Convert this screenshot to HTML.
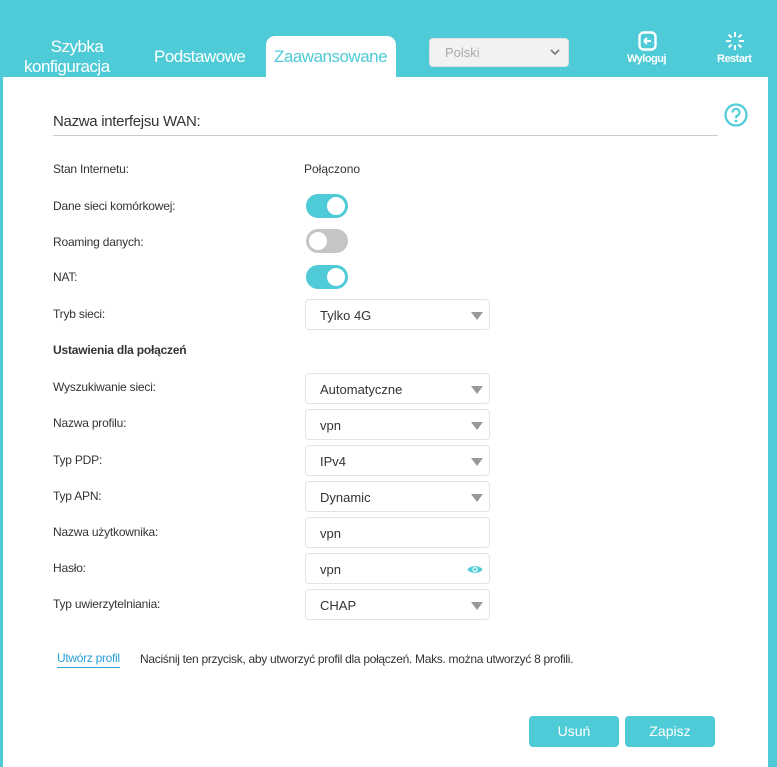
<!DOCTYPE html>
<html><head><meta charset="utf-8"><style>
*{box-sizing:border-box;margin:0;padding:0}
body{width:777px;height:759px;background:#4ecbd6;font-family:"Liberation Sans",sans-serif;position:relative;overflow:hidden;color:#333}
.a{position:absolute}
.nav{color:#fff;font-size:17px;letter-spacing:-0.5px}
.panel{left:3px;top:77px;width:765px;height:690px;background:#fff}
.lbl{left:53px;font-size:12px;color:#333;letter-spacing:-0.2px}
.ctl{left:305px;width:185px;height:31px;border:1px solid #e3e3e3;border-radius:4px;font-size:13px;color:#333;padding:8px 0 0 14px}
.arr{position:absolute;right:6px;top:12px;width:0;height:0;border-left:6px solid transparent;border-right:6px solid transparent;border-top:8px solid #999}
.tg{left:306px;width:42px;height:24px;border-radius:12px;background:#4ecbd6}
.tg::after{content:"";position:absolute;top:3px;right:3px;width:18px;height:18px;border-radius:50%;background:#fff}
.tg.off{background:#c5c5c8}
.tg.off::after{right:auto;left:3px}
.btn{top:716px;width:90px;height:31px;background:#4ecbd6;border-radius:4px;color:#fff;font-size:14px;text-align:center;line-height:31px}
</style></head><body>
<div class="a nav" style="left:42px;top:38px;line-height:18px;text-align:center;width:70px">Szybka</div>
<div class="a nav" style="left:24px;top:57px;">konfiguracja</div>
<div class="a nav" style="left:154px;top:47px">Podstawowe</div>
<div class="a" style="left:266px;top:36px;width:130px;height:44px;background:#fff;border-radius:9px 9px 0 0"></div>
<div class="a nav" style="left:274px;top:47px;color:#4ecbd6">Zaawansowane</div>
<div class="a" style="left:429px;top:38px;width:140px;height:29px;background:#f2f2f2;border-radius:4px;border:1px solid #e0e0e0;font-size:13px;color:#aaa;padding:6px 0 0 15px">Polski
<svg class="a" style="right:8px;top:9px" width="10" height="8" viewBox="0 0 10 8"><path d="M1 2l4 4 4-4" stroke="#777" stroke-width="1.6" fill="none"/></svg></div>
<svg class="a" style="left:638px;top:31px" width="19" height="20" viewBox="0 0 19 20"><rect x="1.5" y="1.5" width="16" height="17" rx="4" fill="none" stroke="#fff" stroke-width="2.4"/><path d="M6 10h7M6 10l3-3M6 10l3 3" stroke="#fff" stroke-width="2" fill="none"/></svg>
<div class="a" style="left:627px;top:53px;color:#fff;font-size:11px;font-weight:bold;letter-spacing:-0.5px">Wyloguj</div>
<svg class="a" style="left:725px;top:31px" width="20" height="20" viewBox="0 0 20 20" stroke="#fff" stroke-width="2"><path d="M10 1v5M10 14v5M1 10h5M14 10h5M3.6 3.6l3 3M13.4 13.4l3 3M16.4 3.6l-3 3M6.6 13.4l-3 3"/></svg>
<div class="a" style="left:717px;top:53px;color:#fff;font-size:11px;font-weight:bold;letter-spacing:-0.5px">Restart</div>

<div class="a panel"></div>
<div class="a" style="left:53px;top:113px;font-size:15px;color:#333;letter-spacing:-0.3px">Nazwa interfejsu WAN:</div>
<div class="a" style="left:53px;top:135px;width:665px;height:1px;background:#ccc"></div>
<svg class="a" style="left:724px;top:103px" width="24" height="24" viewBox="0 0 24 24"><circle cx="12" cy="12" r="10.5" fill="none" stroke="#4ecbd6" stroke-width="2.2"/><path d="M8.5 9.5a3.5 3.5 0 1 1 5 3c-1 .6-1.5 1.2-1.5 2.5" fill="none" stroke="#4ecbd6" stroke-width="2.2"/><circle cx="12" cy="18" r="1.4" fill="#4ecbd6"/></svg>

<div class="a lbl" style="top:162px">Stan Internetu:</div>
<div class="a" style="left:304px;top:162px;font-size:12px">Połączono</div>
<div class="a lbl" style="top:199px">Dane sieci komórkowej:</div>
<div class="a tg" style="top:194px"></div>
<div class="a lbl" style="top:235px">Roaming danych:</div>
<div class="a tg off" style="top:229px"></div>
<div class="a lbl" style="top:270px">NAT:</div>
<div class="a tg" style="top:265px"></div>
<div class="a lbl" style="top:307px">Tryb sieci:</div>
<div class="a ctl" style="top:299px">Tylko 4G<span class="arr"></span></div>
<div class="a lbl" style="top:343px;font-weight:bold">Ustawienia dla połączeń</div>
<div class="a lbl" style="top:380px">Wyszukiwanie sieci:</div>
<div class="a ctl" style="top:373px">Automatyczne<span class="arr"></span></div>
<div class="a lbl" style="top:416px">Nazwa profilu:</div>
<div class="a ctl" style="top:409px">vpn<span class="arr"></span></div>
<div class="a lbl" style="top:453px">Typ PDP:</div>
<div class="a ctl" style="top:445px">IPv4<span class="arr"></span></div>
<div class="a lbl" style="top:489px">Typ APN:</div>
<div class="a ctl" style="top:481px">Dynamic<span class="arr"></span></div>
<div class="a lbl" style="top:525px">Nazwa użytkownika:</div>
<div class="a ctl" style="top:517px">vpn</div>
<div class="a lbl" style="top:561px">Hasło:</div>
<div class="a ctl" style="top:553px">vpn
<svg class="a" style="right:6px;top:10px" width="16" height="11" viewBox="0 0 16 11"><path d="M0.5 5.5C3 1 13 1 15.5 5.5C13 10 3 10 0.5 5.5Z" fill="#4ecbd6"/><circle cx="8" cy="5.5" r="2.6" fill="#fff"/><circle cx="8" cy="5.5" r="1.4" fill="#4ecbd6"/></svg></div>
<div class="a lbl" style="top:597px">Typ uwierzytelniania:</div>
<div class="a ctl" style="top:589px">CHAP<span class="arr"></span></div>

<div class="a" style="left:57px;top:651px;font-size:12px;color:#2a9fd6;border-bottom:1px solid #2a9fd6;padding-bottom:2px;letter-spacing:-0.3px">Utwórz profil</div>
<div class="a" style="left:140px;top:652px;font-size:12px;color:#333;letter-spacing:-0.3px">Naciśnij ten przycisk, aby utworzyć profil dla połączeń. Maks. można utworzyć 8 profili.</div>

<div class="a btn" style="left:529px">Usuń</div>
<div class="a btn" style="left:625px">Zapisz</div>
</body></html>
